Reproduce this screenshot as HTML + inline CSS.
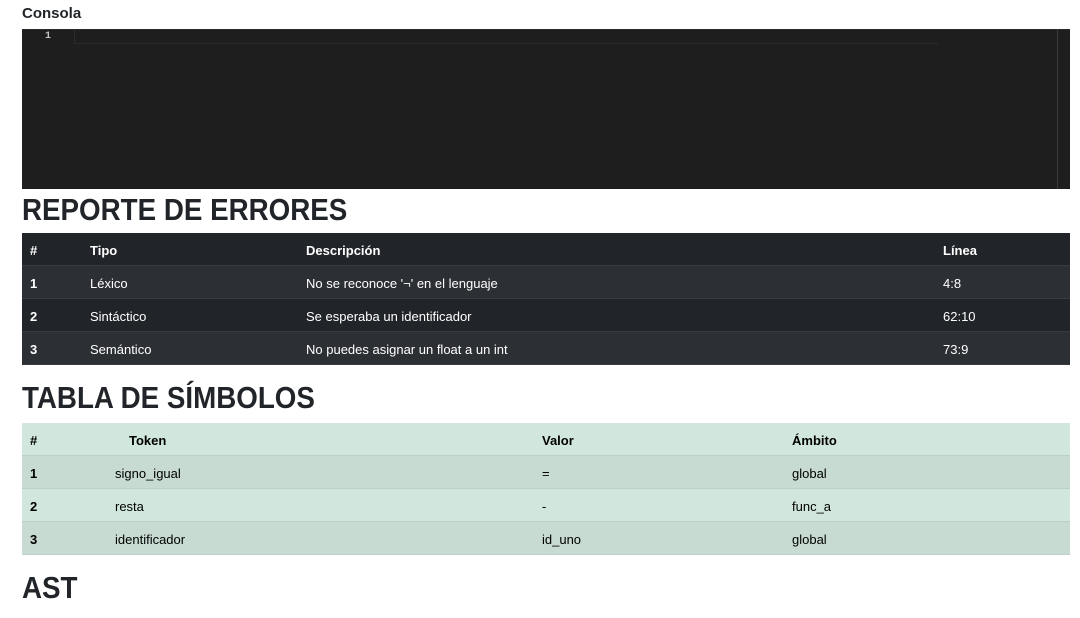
<!DOCTYPE html>
<html><head><meta charset="utf-8"><style>
*{margin:0;padding:0;box-sizing:border-box}
body{width:1080px;height:618px;background:#fff;font-family:"Liberation Sans",sans-serif;color:#212529;position:relative;overflow:hidden}
.a{position:absolute}
h1{position:absolute;left:22px;font-size:31px;font-weight:bold;line-height:36px;color:#212529;transform:scaleX(0.895);transform-origin:left;white-space:nowrap}
.row{position:absolute;left:22px;width:1048px;height:33px;font-size:13px;line-height:35px}
.row span{position:absolute;top:0;white-space:nowrap}
.d{background:#212529;color:#fff;border-bottom:1px solid #373b3e}
.d.s{background:#2c3034}
.g{background:#d1e7dd;color:#000;border-bottom:1px solid #bcd0c7}
.g.s{background:#c7dbd2}
b{font-weight:bold}
</style></head><body>
<div class="a" style="left:22px;top:5px;font-size:15px;font-weight:bold;line-height:18px">Consola</div>
<div class="a" style="left:22px;top:29px;width:1048px;height:160px;background:#1e1e1e">
  <div class="a" style="left:0;top:0;width:1048px;height:1px;background:#2a2a2a"></div>
  <div class="a" style="left:23px;top:2px;font-family:'Liberation Mono',monospace;font-size:10px;font-weight:bold;color:#c6c6c6;line-height:12px">1</div>
  <div class="a" style="left:52px;top:1px;width:864px;height:14px;border-bottom:1px solid #2c2c2c;border-left:1px solid #2c2c2c"></div>
  <div class="a" style="left:1035px;top:0;width:1px;height:160px;background:#3a3a3a"></div>
</div>
<h1 style="top:192px">REPORTE DE ERRORES</h1>
<div class="row d" style="top:233px"><b><span style="left:8px">#</span><span style="left:68px">Tipo</span><span style="left:284px">Descripción</span><span style="left:921px">Línea</span></b></div>
<div class="row d s" style="top:266px"><span style="left:8px"><b>1</b></span><span style="left:68px">Léxico</span><span style="left:284px">No se reconoce '¬' en el lenguaje</span><span style="left:921px">4:8</span></div>
<div class="row d" style="top:299px"><span style="left:8px"><b>2</b></span><span style="left:68px">Sintáctico</span><span style="left:284px">Se esperaba un identificador</span><span style="left:921px">62:10</span></div>
<div class="row d s" style="top:332px"><span style="left:8px"><b>3</b></span><span style="left:68px">Semántico</span><span style="left:284px">No puedes asignar un float a un int</span><span style="left:921px">73:9</span></div>
<h1 style="top:380px">TABLA DE SÍMBOLOS</h1>
<div class="row g" style="top:423px"><b><span style="left:8px">#</span><span style="left:107px">Token</span><span style="left:520px">Valor</span><span style="left:770px">Ámbito</span></b></div>
<div class="row g s" style="top:456px"><span style="left:8px"><b>1</b></span><span style="left:93px">signo_igual</span><span style="left:520px">=</span><span style="left:770px">global</span></div>
<div class="row g" style="top:489px"><span style="left:8px"><b>2</b></span><span style="left:93px">resta</span><span style="left:520px">-</span><span style="left:770px">func_a</span></div>
<div class="row g s" style="top:522px"><span style="left:8px"><b>3</b></span><span style="left:93px">identificador</span><span style="left:520px">id_uno</span><span style="left:770px">global</span></div>
<h1 style="top:570px">AST</h1>
</body></html>
